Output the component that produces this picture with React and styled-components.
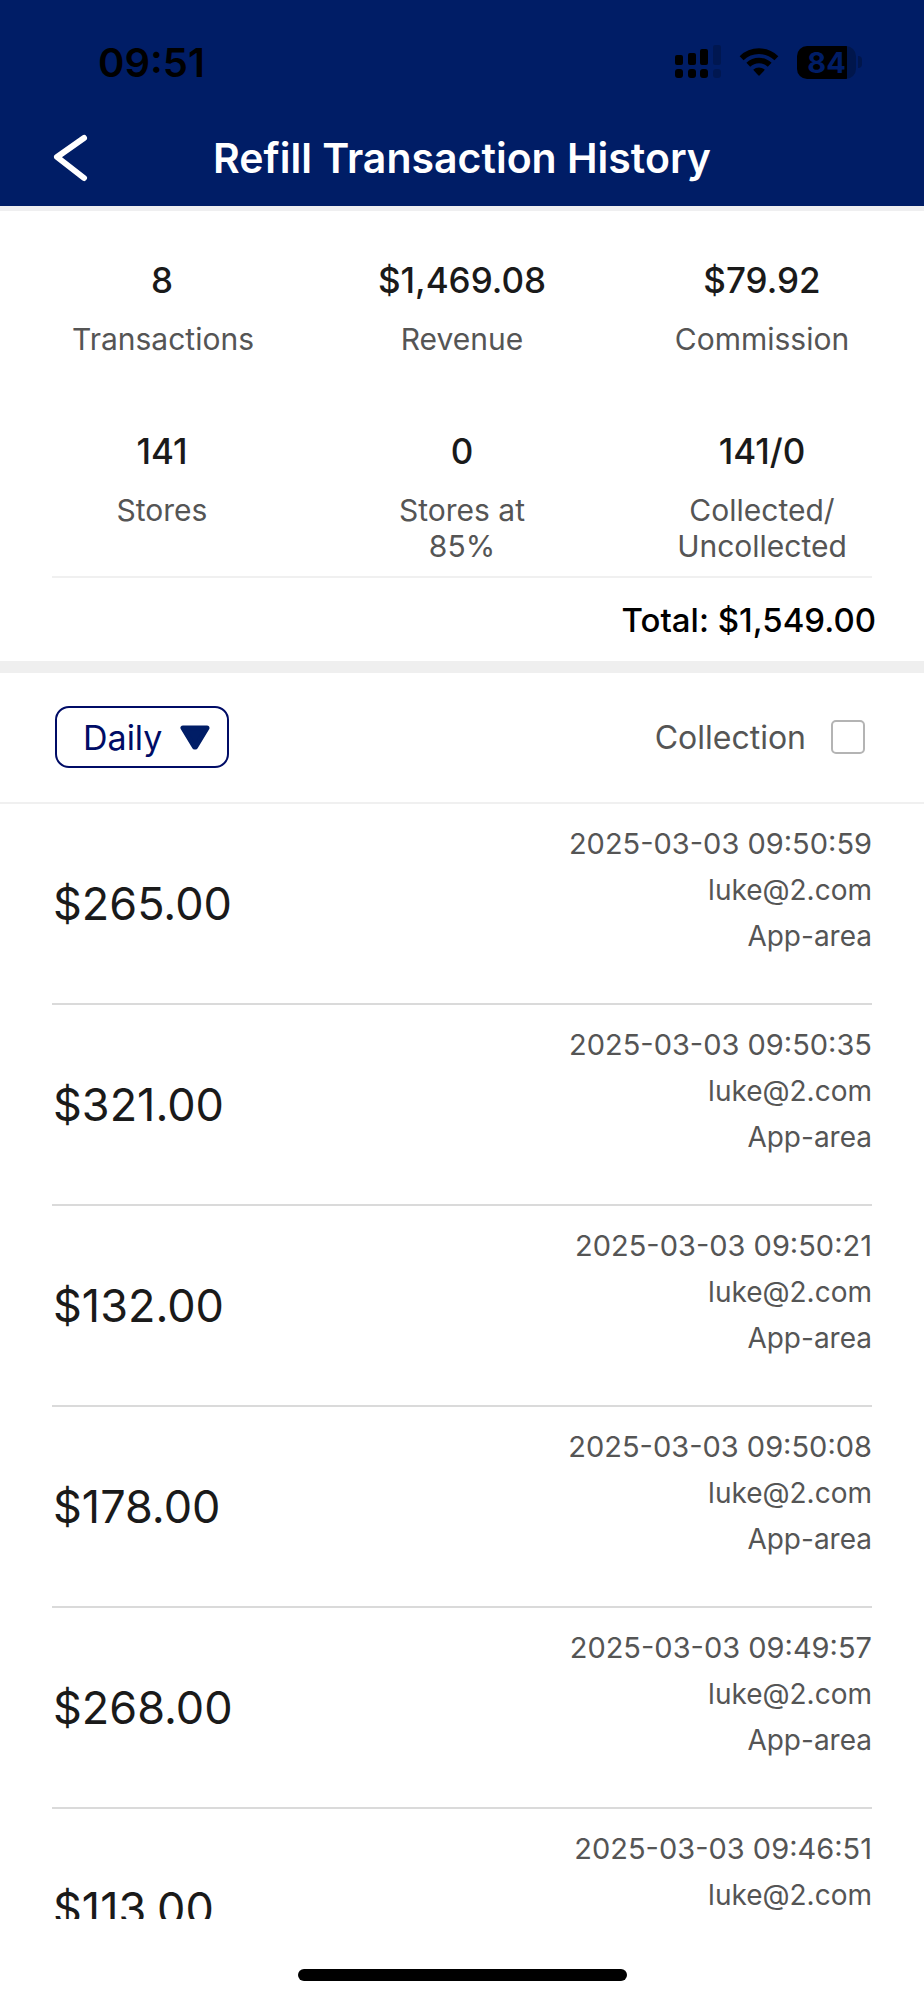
import { useState } from "react"
import styled, { createGlobalStyle } from "styled-components"

const stats = [
  { value: "8", label: "Transactions" },
  { value: "$1,469.08", label: "Revenue" },
  { value: "$79.92", label: "Commission" },
  { value: "141", label: "Stores" },
  { value: "0", label: "Stores at 85%" },
  { value: "141/0", label: "Collected/ Uncollected" },
]

const refills = [
  { amount: "$265.00", date: "2025-03-03 09:50:59", user: "luke@2.com", area: "App-area" },
  { amount: "$321.00", date: "2025-03-03 09:50:35", user: "luke@2.com", area: "App-area" },
  { amount: "$132.00", date: "2025-03-03 09:50:21", user: "luke@2.com", area: "App-area" },
  { amount: "$178.00", date: "2025-03-03 09:50:08", user: "luke@2.com", area: "App-area" },
  { amount: "$268.00", date: "2025-03-03 09:49:57", user: "luke@2.com", area: "App-area" },
  { amount: "$113.00", date: "2025-03-03 09:46:51", user: "luke@2.com", area: "App-area" },
]

function SignalIcon() {
  return (
    <svg width="46" height="34" viewBox="0 0 46 34">
      <rect x="0" y="10" width="8" height="10" rx="2" />
      <rect x="13" y="8" width="8" height="12" rx="2" />
      <rect x="25" y="4" width="8" height="16" rx="2" />
      <rect x="38" y="0" width="8" height="20" rx="2" opacity="0.2" />
      <rect x="0" y="24" width="8" height="9" rx="3" />
      <rect x="13" y="24" width="8" height="9" rx="3" />
      <rect x="25" y="24" width="8" height="9" rx="3" />
      <rect x="38" y="24" width="8" height="9" rx="3" opacity="0.2" />
    </svg>
  )
}

function WifiIcon() {
  return (
    <svg width="40" height="30" viewBox="0 0 40 30">
      <path d="M2.6 11.2 A25 25 0 0 1 37.4 11.2" fill="none" stroke="#000" strokeWidth="5.6" />
      <path d="M9.3 17.8 A15.4 15.4 0 0 1 30.7 17.8" fill="none" stroke="#000" strokeWidth="5.4" />
      <path d="M14.2 22.8 A8.2 8.2 0 0 1 25.8 22.8 L20.8 28.3 Q20 29 19.2 28.3 Z" />
    </svg>
  )
}

export default function App() {
  const [period, setPeriod] = useState("Daily")
  const [collection, setCollection] = useState(false)

  return (
    <Page>
      <GlobalStyle />

      <TopBar>
        <StatusBar>
          <Clock>09:51</Clock>
          <StatusIcons>
            <SignalIcon />
            <WifiIcon />
            <Battery>
              <BatteryLevel>84</BatteryLevel>
              <BatteryTip />
            </Battery>
          </StatusIcons>
        </StatusBar>
        <Header>
          <BackButton type="button" aria-label="Back">
            <svg width="36" height="48" viewBox="0 0 36 48">
              <path d="M32 4 L5 23 L32 44" fill="none" stroke="#fff" strokeWidth="6" strokeLinecap="round" strokeLinejoin="round" />
            </svg>
          </BackButton>
          <h1>Refill Transaction History</h1>
        </Header>
      </TopBar>

      <Summary>
        {stats.map(stat => (
          <Stat key={stat.label}>
            <dd>{stat.value}</dd>
            <dt>{stat.label}</dt>
          </Stat>
        ))}
      </Summary>
      <Divider />
      <Total>Total: $1,549.00</Total>

      <Filters>
        <PeriodPicker>
          <select aria-label="Period" value={period} onChange={e => setPeriod(e.target.value)}>
            <option>Daily</option>
            <option>Weekly</option>
            <option>Monthly</option>
          </select>
          <svg width="32" height="26" viewBox="0 0 32 26">
            <path d="M4 3 H28 L16.5 22 H15.5 Z" fill="#001d66" stroke="#001d66" strokeWidth="5" strokeLinejoin="round" />
          </svg>
        </PeriodPicker>
        <CollectionLabel>
          Collection
          <input type="checkbox" checked={collection} onChange={e => setCollection(e.target.checked)} />
        </CollectionLabel>
      </Filters>

      <RefillList>
        {refills.map(item => (
          <Refill key={item.date}>
            <Amount>{item.amount}</Amount>
            <Details>
              <time>{item.date}</time>
              <p>{item.user}</p>
              <p>{item.area}</p>
            </Details>
          </Refill>
        ))}
      </RefillList>

      <HomeArea>
        <HomeIndicator />
      </HomeArea>
    </Page>
  )
}

const GlobalStyle = createGlobalStyle`
  * {
    box-sizing: border-box;
    margin: 0;
    padding: 0;
  }
  body {
    background-color: #fff;
    font-family: Inter, "Liberation Sans", sans-serif;
    color: #1a1a1a;
  }
  svg {
    display: block;
  }
`
const Page = styled.div`
  display: flex;
  flex-direction: column;
  height: 100vh;
`
const TopBar = styled.header`
  flex-shrink: 0;
  background-color: #001d66;
  border-bottom: 5px solid #efeff0;
`
const StatusBar = styled.div`
  display: flex;
  align-items: center;
  justify-content: space-between;
  height: 110px;
  padding: 14px 62px 0 98px;
  color: #000;
`
const Clock = styled.span`
  font-size: 40px;
  font-weight: 600;
`
const StatusIcons = styled.div`
  display: flex;
  align-items: center;
  gap: 18px;
`
const Battery = styled.div`
  display: flex;
  align-items: center;
  gap: 2px;
`
const BatteryLevel = styled.span`
  width: 59px;
  border-radius: 10px;
  background: linear-gradient(to right, #000 84%, #00164c 84%);
  color: #001d66;
  font-size: 29px;
  font-weight: 700;
  line-height: 33px;
  text-align: center;
`
const BatteryTip = styled.span`
  width: 4px;
  height: 12px;
  border-radius: 0 4px 4px 0;
  background-color: #00164c;
`
const Header = styled.div`
  display: grid;
  grid-template-columns: 1fr auto 1fr;
  align-items: center;
  height: 96px;
  color: #fff;
  h1 {
    font-size: 41px;
    font-weight: 600;
  }
`
const BackButton = styled.button`
  justify-self: start;
  margin-left: 52px;
  border: none;
  background: none;
  cursor: pointer;
`
const Summary = styled.dl`
  flex-shrink: 0;
  display: grid;
  grid-template-columns: repeat(3, 1fr);
  row-gap: 74px;
  padding: 49px 12px 12px;
`
const Stat = styled.div`
  display: flex;
  flex-direction: column;
  align-items: center;
  gap: 21px;
  text-align: center;
  dd {
    font-size: 35px;
    font-weight: 500;
    line-height: 40px;
  }
  dt {
    max-width: 180px;
    font-size: 30px;
    line-height: 36px;
    color: #555;
  }
`
const Divider = styled.hr`
  flex-shrink: 0;
  margin: 0 52px;
  border: none;
  border-top: 2px solid #f0f0f0;
`
const Total = styled.p`
  flex-shrink: 0;
  padding: 22px 48px 21px;
  border-bottom: 12px solid #efefef;
  color: #000;
  font-size: 33px;
  font-weight: 500;
  line-height: 40px;
  text-align: right;
`
const Filters = styled.div`
  flex-shrink: 0;
  display: flex;
  align-items: center;
  justify-content: space-between;
  padding: 33px 59px 34px 55px;
  border-bottom: 2px solid #f0f0f0;
`
const PeriodPicker = styled.div`
  position: relative;
  select {
    appearance: none;
    display: block;
    width: 174px;
    height: 62px;
    padding-left: 26px;
    border: 2px solid #000c66;
    border-radius: 14px;
    background-color: #fff;
    color: #000c66;
    font-family: inherit;
    font-size: 34px;
  }
  svg {
    position: absolute;
    top: 19px;
    right: 18px;
    pointer-events: none;
  }
`
const CollectionLabel = styled.label`
  display: flex;
  align-items: center;
  gap: 25px;
  color: #555;
  font-size: 32px;
  input {
    appearance: none;
    width: 34px;
    height: 34px;
    border: 2px solid #b4b4b4;
    border-radius: 5px;
  }
  input:checked {
    background-color: #001d66;
  }
`
const RefillList = styled.ul`
  flex: 1;
  min-height: 0;
  padding: 0 52px;
  overflow-y: auto;
  scrollbar-width: none;
  list-style: none;
`
const Refill = styled.li`
  display: flex;
  align-items: center;
  justify-content: space-between;
  border-bottom: 2px solid #dadada;
`
const Amount = styled.strong`
  padding-left: 1px;
  font-size: 45px;
  font-weight: 400;
`
const Details = styled.div`
  padding: 17px 0 44px;
  color: #555;
  font-size: 28px;
  line-height: 46px;
  text-align: right;
  time {
    display: block;
    font-size: 29px;
  }
`
const HomeArea = styled.footer`
  flex-shrink: 0;
  display: flex;
  justify-content: center;
  padding: 50px 0 19px;
`
const HomeIndicator = styled.div`
  width: 329px;
  height: 12px;
  border-radius: 6px;
  background-color: #000;
`
